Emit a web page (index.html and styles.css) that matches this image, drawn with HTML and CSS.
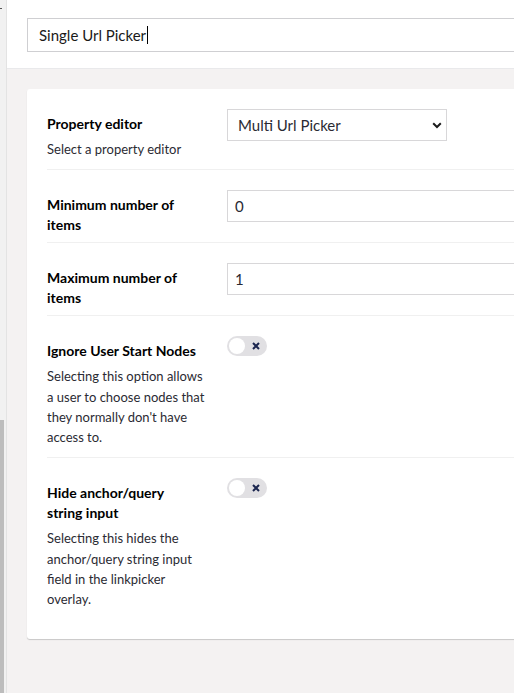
FILE: index.html
```html
<!DOCTYPE html>
<html lang="en">
<head>
<meta charset="utf-8">
<title>Single Url Picker</title>
<link rel="stylesheet" href="styles.css">
</head>
<body>
<div class="app">
  <aside class="rail">
    <span class="rail-mark"></span>
    <span class="rail-scroll"></span>
  </aside>
  <main class="main">
    <header class="header">
      <div class="name-input">Single Url Picker<span class="caret"></span></div>
    </header>
    <section class="content">
      <div class="card">
        <div class="row">
          <div class="label-col">
            <div class="label">Property editor</div>
            <div class="desc">Select a property editor</div>
          </div>
          <div class="control-col">
            <div class="select-wrap">
              <select class="select"><option>Multi Url Picker</option></select>
              <svg class="chevron" width="10" height="7" viewBox="0 0 10 7"><path d="M1.2 1.3 L5 5 L8.8 1.3" fill="none" stroke="#1b1b1b" stroke-width="2"/></svg>
            </div>
          </div>
        </div>
        <div class="row">
          <div class="label-col">
            <div class="label">Minimum number of items</div>
          </div>
          <div class="control-col">
            <div class="text-input">0</div>
          </div>
        </div>
        <div class="row">
          <div class="label-col">
            <div class="label">Maximum number of items</div>
          </div>
          <div class="control-col">
            <div class="text-input">1</div>
          </div>
        </div>
        <div class="row">
          <div class="label-col">
            <div class="label">Ignore User Start Nodes</div>
            <div class="desc">Selecting this option allows a user to choose nodes that they normally don't have access to.</div>
          </div>
          <div class="control-col">
            <div class="toggle">
              <span class="knob"></span>
              <svg class="toggle-x" width="8" height="8" viewBox="0 0 8 8"><path d="M1 1 L7 7 M7 1 L1 7" stroke="#1b264f" stroke-width="2"/></svg>
            </div>
          </div>
        </div>
        <div class="row last">
          <div class="label-col">
            <div class="label">Hide anchor/query string input</div>
            <div class="desc">Selecting this hides the anchor/query string input field in the linkpicker overlay.</div>
          </div>
          <div class="control-col">
            <div class="toggle">
              <span class="knob"></span>
              <svg class="toggle-x" width="8" height="8" viewBox="0 0 8 8"><path d="M1 1 L7 7 M7 1 L1 7" stroke="#1b264f" stroke-width="2"/></svg>
            </div>
          </div>
        </div>
      </div>
    </section>
  </main>
</div>
</body>
</html>
```
FILE: styles.css
```css
html, body {
  margin: 0;
  padding: 0;
  height: 100%;
  overflow: hidden;
  background: #f3f2f2;
  font-family: Lato, "Open Sans", sans-serif;
}

.app {
  display: flex;
  height: 693px;
}

.rail {
  position: relative;
  width: 6px;
  flex-shrink: 0;
  background: #f1f1f1;
  border-right: 1px solid #e3e3e3;
}

.rail-mark {
  position: absolute;
  left: 0;
  top: 8px;
  width: 2px;
  height: 1px;
  background: #555;
}

.rail-scroll {
  position: absolute;
  left: 0;
  top: 420px;
  bottom: 0;
  width: 4px;
  background: #bdbdbd;
}

.main {
  width: 800px;
  flex-shrink: 0;
  display: flex;
  flex-direction: column;
}

.header {
  background: #fff;
  height: 69px;
  box-sizing: border-box;
  padding: 18px 0 0 20px;
  border-bottom: 1px solid #e9e9eb;
}

.name-input {
  box-sizing: border-box;
  height: 34px;
  border: 1px solid #cfcfd2;
  padding: 0 11px;
  font-size: 15px;
  line-height: 32px;
  color: #1a1a1a;
  display: flex;
  align-items: center;
}

.caret {
  display: inline-block;
  width: 1px;
  height: 18px;
  background: #000;
  margin-left: 1px;
}

.content {
  flex: 1;
  padding: 20px 0 0 20px;
  background: #f4f2f2;
}

.card {
  background: #fff;
  border-radius: 3px;
  box-shadow: 0 1px 1px rgba(0, 0, 0, 0.18);
  padding: 0 0 19px 20px;
}

.row {
  display: flex;
  gap: 20px;
  padding: 20px 0 0;
  border-bottom: 1px solid #f0f0f0;
}

.row.last {
  border-bottom: none;
}

.label-col {
  width: 160px;
  flex-shrink: 0;
  padding: 5px 0 7px;
}

.label {
  font-size: 14px;
  font-weight: 700;
  line-height: 20px;
  color: #000;
  padding-right: 5px;
}

.desc {
  margin: 5px 0 3px;
  font-size: 13px;
  line-height: 20.3px;
  color: #2b2b33;
}

.control-col {
  flex: 1;
  padding-bottom: 20px;
}

.select-wrap {
  position: relative;
  width: 220px;
}

.select {
  display: block;
  appearance: none;
  -webkit-appearance: none;
  width: 220px;
  height: 32px;
  box-sizing: border-box;
  border: 1px solid #d8d7d9;
  border-radius: 0;
  background: #fff;
  padding: 0 10px;
  font-family: Lato, "Open Sans", sans-serif;
  font-size: 15px;
  color: #2a2a33;
}

.chevron {
  position: absolute;
  right: 5px;
  top: 13px;
  pointer-events: none;
}

.text-input {
  box-sizing: border-box;
  height: 32px;
  border: 1px solid #d8d7d9;
  padding: 0 7px;
  font-size: 15px;
  line-height: 30px;
  color: #2a2a33;
}

.toggle {
  position: relative;
  width: 40px;
  height: 20px;
  border-radius: 10px;
  background: #e1e0e3;
}

.knob {
  position: absolute;
  left: 2px;
  top: 2px;
  width: 16px;
  height: 16px;
  border-radius: 50%;
  background: #fff;
}

.toggle-x {
  position: absolute;
  left: 25px;
  top: 6px;
}
```
